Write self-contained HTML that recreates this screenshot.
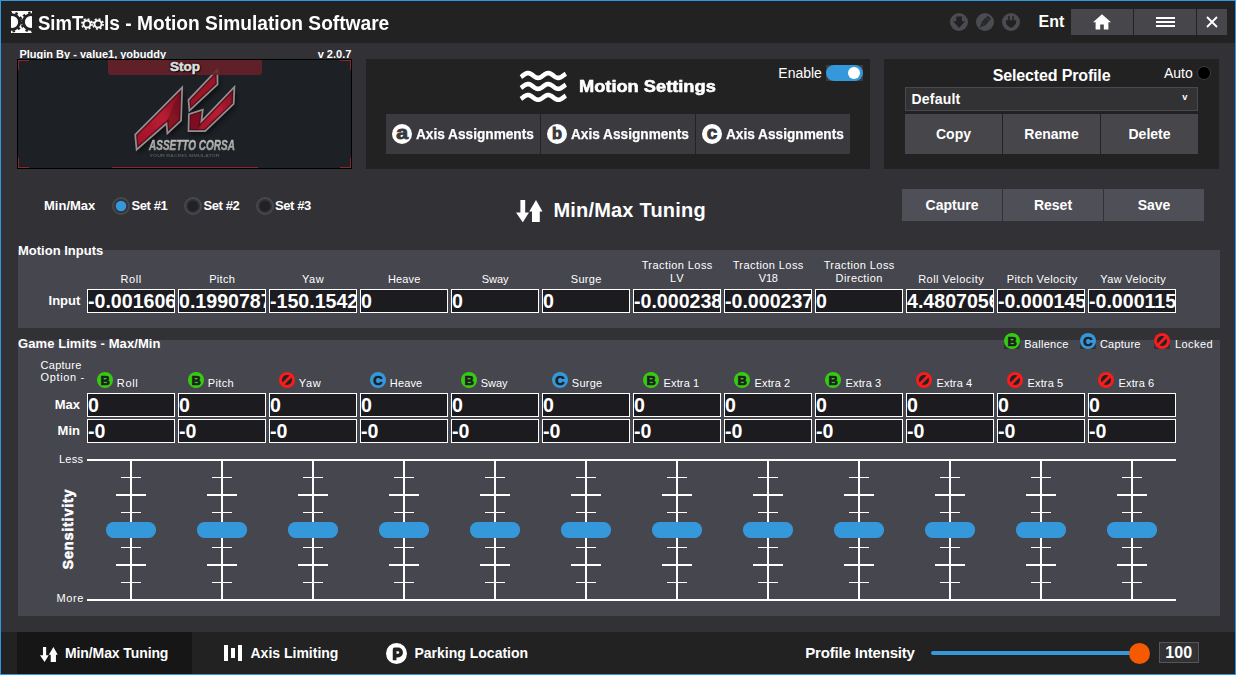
<!DOCTYPE html>
<html><head><meta charset="utf-8"><title>SimTools - Motion Simulation Software</title>
<style>
html,body{margin:0;padding:0;}
body{width:1236px;height:675px;overflow:hidden;background:#323136;font-family:"Liberation Sans",sans-serif;color:#fff;position:relative;}
.r{position:absolute;display:block;}
.t{position:absolute;white-space:nowrap;line-height:1em;color:#fff;}
.hv{-webkit-text-stroke:0.55px #fff;}
.hv2{-webkit-text-stroke:0.25px #fff;}
.box{position:absolute;box-sizing:border-box;border:1px solid #fff;background:#1c1b1f;overflow:hidden;width:88px;height:24px;}
.box span{position:absolute;left:0px;top:2.3px;font-size:19.6px;font-weight:bold;line-height:1em;white-space:nowrap;}
.btn{position:absolute;}
</style></head><body>

<div class="r" style="left:0;top:0;width:1234px;height:673px;border:1px solid #3197e3;"></div>
<div class="r" style="left:1px;top:1px;width:1234px;height:42px;background:#222223;"></div>
<svg class="r" style="left:11px;top:11px" width="21" height="22" viewBox="0 0 21 22">
<rect width="21" height="22" fill="#fff"/>
<circle cx="1.2" cy="11" r="7.4" fill="none" stroke="#222" stroke-width="2.9"/>
<circle cx="1.2" cy="11" r="9.4" fill="none" stroke="#222" stroke-width="2.2" stroke-dasharray="2.5 3.406"/>
<circle cx="19.8" cy="11" r="7.4" fill="none" stroke="#222" stroke-width="2.9"/>
<circle cx="19.8" cy="11" r="9.4" fill="none" stroke="#222" stroke-width="2.2" stroke-dasharray="2.5 3.406"/>
</svg>
<div class="t" style="top:13.07px;font-size:20px;font-weight:bold;left:37.70px;transform-origin:0 50%;transform:scaleX(0.925);">SimT</div>
<div class="t" style="top:13.07px;font-size:20px;font-weight:bold;left:103.90px;transform-origin:0 50%;transform:scaleX(0.958);">ls - Motion Simulation Software</div>
<svg class="r" style="left:79.6px;top:16.8px" width="14" height="14" viewBox="-7 -7 14 14"><circle r="3.5" fill="none" stroke="#fff" stroke-width="1.9"/><circle r="5.1" fill="none" stroke="#fff" stroke-width="1.6" stroke-dasharray="2.0 2.005"/></svg>
<svg class="r" style="left:91px;top:16.8px" width="14" height="14" viewBox="-7 -7 14 14"><circle r="3.5" fill="none" stroke="#fff" stroke-width="1.9"/><circle r="5.1" fill="none" stroke="#fff" stroke-width="1.6" stroke-dasharray="2.0 2.005"/></svg>
<svg class="r" style="left:950px;top:13px" width="18" height="18" viewBox="-9 -9 18 18"><circle r="9" fill="#4b4b52"/><path d="M-2.7 -5.6 H2.9 V-0.7 H6.1 L0.1 5.9 L-5.9 -0.7 H-2.7 Z" fill="#222223"/></svg>
<svg class="r" style="left:976px;top:13px" width="18" height="18" viewBox="-9 -9 18 18"><circle r="9" fill="#4b4b52"/><g transform="rotate(42)"><rect x="-2.1" y="-6.4" width="4.2" height="2" fill="#222223"/><rect x="-2.1" y="-3.9" width="4.2" height="6.6" fill="#2c2c30"/><path d="M-2.1 -3.9 V2.7 M2.1 -3.9 V2.7 M0 -3.9 V2.7" stroke="#222223" stroke-width="0.9"/><path d="M-2.1 3.2 H2.1 L0.9 5.4 H-0.9 Z" fill="#222223"/><rect x="-0.7" y="5.9" width="1.4" height="1.4" fill="#222223"/></g></svg>
<svg class="r" style="left:1002px;top:13px" width="18" height="18" viewBox="-9 -9 18 18"><circle r="9" fill="#4b4b52"/><rect x="-2.8" y="-5.9" width="1.5" height="5" fill="#222223"/><rect x="1.4" y="-5.9" width="1.5" height="5" fill="#222223"/><path d="M-5.1 -1.7 H5.2 V0 C5.2 2.2 3 4.6 0.05 6 C-3 4.6 -5.1 2.2 -5.1 0 Z" fill="#222223"/></svg>
<div class="t" style="top:14.46px;font-size:16px;font-weight:bold;left:1038.50px;">Ent</div>
<div class="r" style="left:1071px;top:9px;width:62px;height:26px;background:#46464b;"></div>
<div class="r" style="left:1134px;top:9px;width:62px;height:26px;background:#46464b;"></div>
<div class="r" style="left:1197px;top:9px;width:30px;height:26px;background:#46464b;"></div>
<svg class="r" style="left:1092px;top:13px" width="20" height="18" viewBox="0 0 20 18"><path d="M10 1.2 L1 9.2 H3.6 V16.6 H8.2 V11.4 H11.8 V16.6 H16.4 V9.2 H19 Z" fill="#fff"/></svg>
<div class="r" style="left:1156px;top:17px;width:19px;height:2px;background:#fff;"></div>
<div class="r" style="left:1156px;top:21px;width:19px;height:2px;background:#fff;"></div>
<div class="r" style="left:1156px;top:25px;width:19px;height:2px;background:#fff;"></div>
<svg class="r" style="left:1205px;top:15px" width="14" height="14" viewBox="0 0 14 14"><path d="M2 2 L12 12 M12 2 L2 12" stroke="#fff" stroke-width="1.9" fill="none"/></svg>
<div class="t" style="top:49.09px;font-size:11px;font-weight:bold;left:19.40px;">Plugin By - value1, yobuddy</div>
<div class="t" style="top:49.09px;font-size:11px;font-weight:bold;right:884.70px;">v 2.0.7</div>
<div class="r" style="left:17px;top:59px;width:333px;height:108px;border:1px solid #000;background:#1d2024;overflow:hidden;" id="pic">
<div class="r" style="left:0px;top:0px;width:11px;height:1px;background:#8a2630;"></div>
<div class="r" style="left:0px;top:0px;width:1px;height:10px;background:#8a2630;"></div>
<div class="r" style="left:322px;top:0px;width:11px;height:1px;background:#8a2630;"></div>
<div class="r" style="left:332px;top:0px;width:1px;height:10px;background:#8a2630;"></div>
<div class="r" style="left:0px;top:107px;width:11px;height:1px;background:#8a2630;"></div>
<div class="r" style="left:0px;top:98px;width:1px;height:10px;background:#8a2630;"></div>
<div class="r" style="left:322px;top:107px;width:11px;height:1px;background:#8a2630;"></div>
<div class="r" style="left:332px;top:98px;width:1px;height:10px;background:#8a2630;"></div>
<div class="r" style="left:94px;top:107px;width:146px;height:1px;background:#8a2630;"></div>
<svg class="r" style="left:0;top:0" width="333" height="108" viewBox="0 0 333 108">
<defs>
<linearGradient id="rg1" x1="0" y1="1" x2="1" y2="0"><stop offset="0" stop-color="#9a1428"/><stop offset="0.55" stop-color="#b81c32"/><stop offset="1" stop-color="#741020"/></linearGradient>
<linearGradient id="rg2" x1="0" y1="0" x2="1" y2="1"><stop offset="0" stop-color="#8a1424"/><stop offset="1" stop-color="#a2172b"/></linearGradient>
<linearGradient id="tg" x1="0" y1="0" x2="0" y2="1"><stop offset="0" stop-color="#cfcfcf"/><stop offset="1" stop-color="#8e8e8e"/></linearGradient>
<filter id="bl" x="-5%" y="-5%" width="110%" height="110%"><feGaussianBlur stdDeviation="0.4"/></filter>
<filter id="sh" x="-20%" y="-20%" width="140%" height="140%"><feGaussianBlur stdDeviation="2.5"/></filter>
<clipPath id="ca"><path d="M117.2 74.7 L164.2 27.5 L163.1 60.5 L149.4 73.4 L148.5 63.6 L118.6 89.7 Z"/></clipPath><clipPath id="cb"><path d="M199.3 9.6 L199.6 24.4 L171.4 50.7 L170.5 39.8 Z"/></clipPath><clipPath id="cc"><path d="M216.4 26.9 L215.7 43.8 L187.2 71.1 L170.5 71.1 L170.9 54.1 L184.8 49.6 L183.4 61.3 Z"/></clipPath>
</defs>
<g filter="url(#sh)" opacity="0.6" fill="#000"><path d="M119 78 L166 31 L165 64 L151 77 L150 67 L120 93 Z"/><path d="M201 17 L201 28 L173 54 L172 43 Z"/><path d="M218 30 L217 47 L189 74 L172 74 L172 57 L186 53 L185 64 Z"/></g>
<g filter="url(#bl)">
<path d="M117.2 74.7 L164.2 27.5 L163.1 60.5 L149.4 73.4 L148.5 63.6 L118.6 89.7 Z" fill="url(#rg1)"/><path d="M164.2 27.5 L163.1 60.5 L149.4 73.4 L148.5 63.6 L155 45 Z" fill="#7a1020" opacity="0.75"/><path d="M117.2 74.7 L164.2 27.5 L163.1 60.5 L149.4 73.4 L148.5 63.6 L118.6 89.7 Z" fill="none" stroke="#4e0a14" stroke-width="4.4" clip-path="url(#ca)" opacity="0.8"/><path d="M117.2 74.7 L164.2 27.5 L163.1 60.5 L149.4 73.4 L148.5 63.6 L118.6 89.7 Z" fill="none" stroke="#909094" stroke-width="1.7"/>
<path d="M199.3 9.6 L199.6 24.4 L171.4 50.7 L170.5 39.8 Z" fill="url(#rg2)"/><path d="M199.3 9.6 L199.6 24.4 L171.4 50.7 L170.5 39.8 Z" fill="none" stroke="#4e0a14" stroke-width="4.4" clip-path="url(#cb)" opacity="0.8"/><path d="M199.3 9.6 L199.6 24.4 L171.4 50.7 L170.5 39.8 Z" fill="none" stroke="#909094" stroke-width="1.7"/>
<path d="M216.4 26.9 L215.7 43.8 L187.2 71.1 L170.5 71.1 L170.9 54.1 L184.8 49.6 L183.4 61.3 Z" fill="url(#rg1)"/><path d="M170.9 54.1 L184.8 49.6 L183.4 61.3 L180 71.1 L170.5 71.1 Z" fill="#6e0e1c" opacity="0.7"/><path d="M216.4 26.9 L215.7 43.8 L187.2 71.1 L170.5 71.1 L170.9 54.1 L184.8 49.6 L183.4 61.3 Z" fill="none" stroke="#4e0a14" stroke-width="4.4" clip-path="url(#cc)" opacity="0.8"/><path d="M216.4 26.9 L215.7 43.8 L187.2 71.1 L170.5 71.1 L170.9 54.1 L184.8 49.6 L183.4 61.3 Z" fill="none" stroke="#909094" stroke-width="1.7"/>
</g>
<g filter="url(#bl)">
<text x="131" y="89.6" font-family="Liberation Sans" font-weight="bold" font-style="italic" font-size="15.5" fill="url(#tg)" stroke="#aaa" stroke-width="0.5" textLength="86" lengthAdjust="spacingAndGlyphs">ASSETTO CORSA</text>
<text x="131.5" y="96.6" font-family="Liberation Sans" font-weight="bold" font-size="4.2" fill="#55575b" textLength="70" lengthAdjust="spacingAndGlyphs">YOUR RACING SIMULATOR</text>
</g>
</svg>
<div class="r" style="left:90px;top:0;width:154px;height:14.5px;background:rgba(107,33,41,0.86);border-radius:0 0 3px 3px;"></div>
<div class="t hv" style="left:167px;top:0.6px;transform:translateX(-50%) scaleX(1.12);font-size:12px;font-weight:bold;color:#dedede;text-shadow:0 0 2px #000,0 0 2px #000,1px 1px 1px #000;-webkit-text-stroke:0.55px #dedede;">Stop</div>
</div>
<div class="r" style="left:366px;top:59px;width:504px;height:110px;background:#222223;"></div>
<svg class="r" style="left:514px;top:64px" width="60" height="44" viewBox="0 0 60 44"><g fill="none" stroke="#fff" stroke-width="4.6"><polyline points="6.85,12.96 7.35,12.65 7.85,12.31 8.35,11.95 8.85,11.57 9.35,11.20 9.85,10.84 10.35,10.49 10.85,10.16 11.35,9.87 11.85,9.62 12.35,9.41 12.85,9.25 13.35,9.15 13.85,9.10 14.35,9.11 14.85,9.18 15.35,9.31 15.85,9.49 16.35,9.71 16.85,9.98 17.35,10.29 17.85,10.62 18.35,10.98 18.85,11.35 19.35,11.72 19.85,12.09 20.35,12.44 20.85,12.77 21.35,13.07 21.85,13.34 22.35,13.55 22.85,13.72 23.35,13.83 23.85,13.89 24.35,13.89 24.85,13.83 25.35,13.72 25.85,13.55 26.35,13.34 26.85,13.07 27.35,12.77 27.85,12.44 28.35,12.09 28.85,11.72 29.35,11.35 29.85,10.98 30.35,10.62 30.85,10.29 31.35,9.98 31.85,9.71 32.35,9.49 32.85,9.31 33.35,9.18 33.85,9.11 34.35,9.10 34.85,9.15 35.35,9.25 35.85,9.41 36.35,9.62 36.85,9.87 37.35,10.16 37.85,10.49 38.35,10.84 38.85,11.20 39.35,11.57 39.85,11.95 40.35,12.31 40.85,12.65 41.35,12.96 41.85,13.24 42.35,13.47 42.85,13.66 43.35,13.80 43.85,13.88 44.35,13.90 44.85,13.86 45.35,13.77 45.85,13.63 46.35,13.43 46.85,13.18 47.35,12.90 47.85,12.58 48.35,12.23 48.85,11.87 49.35,11.50 49.85,11.13 50.35,10.77 50.85,10.42 51.35,10.10 51.85,9.82"/><polyline points="6.85,23.91 7.35,23.60 7.85,23.26 8.35,22.90 8.85,22.52 9.35,22.15 9.85,21.79 10.35,21.44 10.85,21.11 11.35,20.82 11.85,20.57 12.35,20.36 12.85,20.20 13.35,20.10 13.85,20.05 14.35,20.06 14.85,20.13 15.35,20.26 15.85,20.44 16.35,20.66 16.85,20.93 17.35,21.24 17.85,21.57 18.35,21.93 18.85,22.30 19.35,22.67 19.85,23.04 20.35,23.39 20.85,23.72 21.35,24.02 21.85,24.29 22.35,24.50 22.85,24.67 23.35,24.78 23.85,24.84 24.35,24.84 24.85,24.78 25.35,24.67 25.85,24.50 26.35,24.29 26.85,24.02 27.35,23.72 27.85,23.39 28.35,23.04 28.85,22.67 29.35,22.30 29.85,21.93 30.35,21.57 30.85,21.24 31.35,20.93 31.85,20.66 32.35,20.44 32.85,20.26 33.35,20.13 33.85,20.06 34.35,20.05 34.85,20.10 35.35,20.20 35.85,20.36 36.35,20.57 36.85,20.82 37.35,21.11 37.85,21.44 38.35,21.79 38.85,22.15 39.35,22.52 39.85,22.90 40.35,23.26 40.85,23.60 41.35,23.91 41.85,24.19 42.35,24.42 42.85,24.61 43.35,24.75 43.85,24.83 44.35,24.85 44.85,24.81 45.35,24.72 45.85,24.58 46.35,24.38 46.85,24.13 47.35,23.85 47.85,23.53 48.35,23.18 48.85,22.82 49.35,22.45 49.85,22.08 50.35,21.72 50.85,21.37 51.35,21.05 51.85,20.77"/><polyline points="6.85,34.86 7.35,34.55 7.85,34.21 8.35,33.85 8.85,33.47 9.35,33.10 9.85,32.74 10.35,32.39 10.85,32.06 11.35,31.77 11.85,31.52 12.35,31.31 12.85,31.15 13.35,31.05 13.85,31.00 14.35,31.01 14.85,31.08 15.35,31.21 15.85,31.39 16.35,31.61 16.85,31.88 17.35,32.19 17.85,32.52 18.35,32.88 18.85,33.25 19.35,33.62 19.85,33.99 20.35,34.34 20.85,34.67 21.35,34.97 21.85,35.24 22.35,35.45 22.85,35.62 23.35,35.73 23.85,35.79 24.35,35.79 24.85,35.73 25.35,35.62 25.85,35.45 26.35,35.24 26.85,34.97 27.35,34.67 27.85,34.34 28.35,33.99 28.85,33.62 29.35,33.25 29.85,32.88 30.35,32.52 30.85,32.19 31.35,31.88 31.85,31.61 32.35,31.39 32.85,31.21 33.35,31.08 33.85,31.01 34.35,31.00 34.85,31.05 35.35,31.15 35.85,31.31 36.35,31.52 36.85,31.77 37.35,32.06 37.85,32.39 38.35,32.74 38.85,33.10 39.35,33.47 39.85,33.85 40.35,34.21 40.85,34.55 41.35,34.86 41.85,35.14 42.35,35.37 42.85,35.56 43.35,35.70 43.85,35.78 44.35,35.80 44.85,35.76 45.35,35.67 45.85,35.53 46.35,35.33 46.85,35.08 47.35,34.80 47.85,34.48 48.35,34.13 48.85,33.77 49.35,33.40 49.85,33.03 50.35,32.67 50.85,32.32 51.35,32.00 51.85,31.72"/></g></svg>
<div class="t hv" style="top:79.46px;font-size:16px;font-weight:bold;left:578.50px;transform-origin:0 50%;transform:scaleX(1.14);">Motion Settings</div>
<div class="t" style="top:66.15px;font-size:14px;left:778.30px;">Enable</div>
<div class="r" style="left:826px;top:65px;width:37px;height:16px;background:#3a3a40;"></div>
<div class="r" style="left:826px;top:65px;width:37px;height:16px;background:#3498db;border-radius:8px;"></div>
<div class="r" style="left:848px;top:67px;width:12px;height:12px;background:#fff;border-radius:6px;"></div>
<div class="r" style="left:386px;top:114px;width:154px;height:40px;background:#3a3a3f;"></div>
<svg class="r" style="left:391.6px;top:124.3px" width="20" height="20" viewBox="0 0 20 20"><circle cx="10" cy="10" r="10" fill="#fff"/><g transform="translate(10.1 14.5) scale(1.17 1)"><text x="0" y="0" text-anchor="middle" font-family="Liberation Sans" font-weight="bold" font-size="18.2" fill="#38383d" stroke="#38383d" stroke-width="0.9">a</text></g></svg>
<div class="t hv2" style="top:126.95px;font-size:14px;font-weight:bold;left:416.40px;transform-origin:0 50%;transform:scaleX(0.975);">Axis Assignments</div>
<div class="r" style="left:541px;top:114px;width:154px;height:40px;background:#3a3a3f;"></div>
<svg class="r" style="left:546.6px;top:124.3px" width="20" height="20" viewBox="0 0 20 20"><circle cx="10" cy="10" r="10" fill="#fff"/><g transform="translate(10.1 14.5) scale(1.02 1)"><text x="0" y="0" text-anchor="middle" font-family="Liberation Sans" font-weight="bold" font-size="16" fill="#38383d" stroke="#38383d" stroke-width="0.9">b</text></g></svg>
<div class="t hv2" style="top:126.95px;font-size:14px;font-weight:bold;left:571.40px;transform-origin:0 50%;transform:scaleX(0.975);">Axis Assignments</div>
<div class="r" style="left:696px;top:114px;width:154px;height:40px;background:#3a3a3f;"></div>
<svg class="r" style="left:701.6px;top:124.3px" width="20" height="20" viewBox="0 0 20 20"><circle cx="10" cy="10" r="10" fill="#fff"/><g transform="translate(10.1 14.5) scale(1.0 1)"><text x="0" y="0" text-anchor="middle" font-family="Liberation Sans" font-weight="bold" font-size="19" fill="#38383d" stroke="#38383d" stroke-width="0.9">c</text></g></svg>
<div class="t hv2" style="top:126.95px;font-size:14px;font-weight:bold;left:726.40px;transform-origin:0 50%;transform:scaleX(0.975);">Axis Assignments</div>
<div class="r" style="left:884px;top:59px;width:335px;height:110px;background:#222223;"></div>
<div class="t" style="top:68.16px;font-size:16px;font-weight:bold;letter-spacing:-0.15px;left:1051.60px;transform:translateX(-50%);">Selected Profile</div>
<div class="t" style="top:66.15px;font-size:14px;left:1164.00px;">Auto</div>
<div class="r" style="left:1197px;top:66px;width:14px;height:14px;background:#000;border-radius:7px;box-sizing:border-box;border:1px solid #3c3c42;"></div>
<div class="r" style="left:905px;top:87px;width:291px;height:22px;border:1px solid #48484e;background:#323235;"></div>
<div class="t" style="top:92.05px;font-size:14px;font-weight:bold;letter-spacing:0.2px;left:911.50px;">Default</div>
<div class="t" style="top:93.43px;font-size:9.3px;font-weight:bold;left:1182.30px;">v</div>
<div class="r" style="left:905px;top:114px;width:97px;height:40px;background:#46464b;"></div>
<div class="t" style="top:127.15px;font-size:14px;font-weight:bold;left:953.50px;transform:translateX(-50%);">Copy</div>
<div class="r" style="left:1003px;top:114px;width:97px;height:40px;background:#46464b;"></div>
<div class="t" style="top:127.15px;font-size:14px;font-weight:bold;left:1051.50px;transform:translateX(-50%);">Rename</div>
<div class="r" style="left:1101px;top:114px;width:97px;height:40px;background:#46464b;"></div>
<div class="t" style="top:127.15px;font-size:14px;font-weight:bold;left:1149.50px;transform:translateX(-50%);">Delete</div>
<div class="t" style="top:199.00px;font-size:13px;font-weight:bold;left:44.00px;">Min/Max</div>
<svg class="r" style="left:111px;top:196px" width="20" height="20" viewBox="-10 -10 20 20"><circle r="8" fill="none" stroke="#47474e" stroke-width="2"/><circle r="5.3" fill="#3498db"/></svg>
<svg class="r" style="left:183px;top:196px" width="20" height="20" viewBox="-10 -10 20 20"><circle r="8" fill="none" stroke="#47474e" stroke-width="2"/><circle r="5.3" fill="#222224"/></svg>
<svg class="r" style="left:254.7px;top:196px" width="20" height="20" viewBox="-10 -10 20 20"><circle r="8" fill="none" stroke="#47474e" stroke-width="2"/><circle r="5.3" fill="#222224"/></svg>
<div class="t" style="top:199.00px;font-size:13px;font-weight:bold;letter-spacing:-0.4px;left:131.50px;">Set #1</div>
<div class="t" style="top:199.00px;font-size:13px;font-weight:bold;letter-spacing:-0.4px;left:203.50px;">Set #2</div>
<div class="t" style="top:199.00px;font-size:13px;font-weight:bold;letter-spacing:-0.4px;left:275.00px;">Set #3</div>
<svg class="r" style="left:516px;top:199.6px" width="26.50" height="22.40" viewBox="0 0 26.5 22.4"><path d="M4.4 0 H9.2 V12.4 H13 L6.8 22.4 L0 12.4 H4.4 Z" fill="#fff"/><path d="M20 0 L26.5 11.4 H23.8 V22.4 H16 V11.4 H13.2 Z" fill="#fff"/></svg>
<div class="t" style="top:199.77px;font-size:20px;font-weight:bold;letter-spacing:0.2px;left:553.40px;">Min/Max Tuning</div>
<div class="r" style="left:902px;top:189px;width:100px;height:32px;background:#4f4f58;"></div>
<div class="t" style="top:197.85px;font-size:14px;font-weight:bold;left:952.00px;transform:translateX(-50%);">Capture</div>
<div class="r" style="left:1003px;top:189px;width:100px;height:32px;background:#4f4f58;"></div>
<div class="t" style="top:197.85px;font-size:14px;font-weight:bold;left:1053.00px;transform:translateX(-50%);">Reset</div>
<div class="r" style="left:1104px;top:189px;width:100px;height:32px;background:#4f4f58;"></div>
<div class="t" style="top:197.85px;font-size:14px;font-weight:bold;left:1154.00px;transform:translateX(-50%);">Save</div>
<div class="r" style="left:18px;top:250px;width:1202px;height:78px;background:#46464e;"></div>
<div class="t" style="top:244.00px;font-size:13px;font-weight:bold;left:18.00px;">Motion Inputs</div>
<div class="t" style="top:294.00px;font-size:13px;font-weight:bold;right:1155.70px;">Input</div>
<div class="box" style="left:87px;top:289px;"><span>-0.001606</span></div>
<div class="t" style="top:273.69px;font-size:11px;letter-spacing:0.649px;left:131.20px;transform:translateX(-50%);">Roll</div>
<div class="box" style="left:178px;top:289px;"><span>0.1990787</span></div>
<div class="t" style="top:273.69px;font-size:11px;letter-spacing:0.333px;left:222.20px;transform:translateX(-50%);">Pitch</div>
<div class="box" style="left:269px;top:289px;"><span>-150.1542</span></div>
<div class="t" style="top:273.69px;font-size:11px;letter-spacing:0.653px;left:313.20px;transform:translateX(-50%);">Yaw</div>
<div class="box" style="left:360px;top:289px;"><span>0</span></div>
<div class="t" style="top:273.69px;font-size:11px;letter-spacing:0.151px;left:404.20px;transform:translateX(-50%);">Heave</div>
<div class="box" style="left:451px;top:289px;"><span>0</span></div>
<div class="t" style="top:273.69px;font-size:11px;letter-spacing:-0.035px;left:495.20px;transform:translateX(-50%);">Sway</div>
<div class="box" style="left:542px;top:289px;"><span>0</span></div>
<div class="t" style="top:273.69px;font-size:11px;letter-spacing:0.26px;left:586.20px;transform:translateX(-50%);">Surge</div>
<div class="box" style="left:633px;top:289px;"><span>-0.000238</span></div>
<div class="t" style="top:260.09px;font-size:11px;letter-spacing:0.423px;left:677.20px;transform:translateX(-50%);">Traction Loss</div>
<div class="t" style="top:272.89px;font-size:11px;letter-spacing:0.759px;left:677.20px;transform:translateX(-50%);">LV</div>
<div class="box" style="left:724px;top:289px;"><span>-0.000237</span></div>
<div class="t" style="top:260.09px;font-size:11px;letter-spacing:0.423px;left:768.20px;transform:translateX(-50%);">Traction Loss</div>
<div class="t" style="top:272.89px;font-size:11px;letter-spacing:-0.289px;left:768.20px;transform:translateX(-50%);">V18</div>
<div class="box" style="left:815px;top:289px;"><span>0</span></div>
<div class="t" style="top:260.09px;font-size:11px;letter-spacing:0.423px;left:859.20px;transform:translateX(-50%);">Traction Loss</div>
<div class="t" style="top:272.89px;font-size:11px;letter-spacing:0.437px;left:859.20px;transform:translateX(-50%);">Direction</div>
<div class="box" style="left:906px;top:289px;"><span>4.4807056</span></div>
<div class="t" style="top:273.69px;font-size:11px;letter-spacing:0.473px;left:951.20px;transform:translateX(-50%);">Roll Velocity</div>
<div class="box" style="left:997px;top:289px;"><span>-0.000145</span></div>
<div class="t" style="top:273.69px;font-size:11px;letter-spacing:0.391px;left:1042.20px;transform:translateX(-50%);">Pitch Velocity</div>
<div class="box" style="left:1088px;top:289px;"><span>-0.000115</span></div>
<div class="t" style="top:273.69px;font-size:11px;letter-spacing:0.349px;left:1133.20px;transform:translateX(-50%);">Yaw Velocity</div>
<div class="r" style="left:18px;top:340px;width:1202px;height:276px;background:#46464e;"></div>
<div class="t" style="top:337.00px;font-size:13px;font-weight:bold;letter-spacing:0.08px;left:18.00px;">Game Limits - Max/Min</div>
<div class="r" style="left:1004px;top:333px;width:16px;height:16px;background:#323136;"></div>
<svg class="r" style="left:1004px;top:333px" width="16" height="16" viewBox="0 0 16 16"><circle cx="8" cy="8" r="8" fill="#35cc10"/><text x="8.1" y="12.7" text-anchor="middle" font-family="Liberation Sans" font-weight="bold" font-size="13" fill="#1d1d22" stroke="#1d1d22" stroke-width="0.7">B</text></svg>
<div class="t" style="top:338.59px;font-size:11px;letter-spacing:0.285px;left:1024.20px;">Ballence</div>
<div class="r" style="left:1080px;top:333px;width:16px;height:16px;background:#323136;"></div>
<svg class="r" style="left:1080px;top:333px" width="16" height="16" viewBox="0 0 16 16"><circle cx="8" cy="8" r="8" fill="#3498db"/><text x="8" y="12.7" text-anchor="middle" font-family="Liberation Sans" font-weight="bold" font-size="13" fill="#1d1d22" stroke="#1d1d22" stroke-width="0.7">C</text></svg>
<div class="t" style="top:338.59px;font-size:11px;letter-spacing:0.227px;left:1099.90px;">Capture</div>
<div class="r" style="left:1154px;top:333px;width:16px;height:16px;background:#323136;"></div>
<svg class="r" style="left:1154px;top:333px" width="16" height="16" viewBox="0 0 16 16"><circle cx="8" cy="8" r="8" fill="#f81c1c"/><circle cx="8" cy="8" r="5" fill="#1c2424"/><path d="M3 11 L11 3 L13 5 L5 13 Z" fill="#f81c1c"/></svg>
<div class="t" style="top:338.59px;font-size:11px;letter-spacing:0.443px;left:1175.00px;">Locked</div>
<div class="t" style="top:359.89px;font-size:11px;letter-spacing:0.26px;left:40.60px;">Capture</div>
<div class="t" style="top:372.39px;font-size:11px;letter-spacing:0.637px;left:40.60px;">Option -</div>
<div class="t" style="top:397.60px;font-size:13px;font-weight:bold;right:1156.00px;">Max</div>
<div class="t" style="top:423.80px;font-size:13px;font-weight:bold;right:1156.00px;">Min</div>
<svg class="r" style="left:97px;top:372px" width="16" height="16" viewBox="0 0 16 16"><circle cx="8" cy="8" r="8" fill="#35cc10"/><text x="8.1" y="12.7" text-anchor="middle" font-family="Liberation Sans" font-weight="bold" font-size="13" fill="#1d1d22" stroke="#1d1d22" stroke-width="0.7">B</text></svg>
<div class="t" style="top:378.39px;font-size:11px;letter-spacing:0.649px;left:116.80px;">Roll</div>
<div class="box" style="left:87px;top:393px;"><span>0</span></div>
<div class="box" style="left:87px;top:419px;"><span>-0</span></div>
<svg class="r" style="left:188px;top:372px" width="16" height="16" viewBox="0 0 16 16"><circle cx="8" cy="8" r="8" fill="#35cc10"/><text x="8.1" y="12.7" text-anchor="middle" font-family="Liberation Sans" font-weight="bold" font-size="13" fill="#1d1d22" stroke="#1d1d22" stroke-width="0.7">B</text></svg>
<div class="t" style="top:378.39px;font-size:11px;letter-spacing:0.333px;left:207.80px;">Pitch</div>
<div class="box" style="left:178px;top:393px;"><span>0</span></div>
<div class="box" style="left:178px;top:419px;"><span>-0</span></div>
<svg class="r" style="left:279px;top:372px" width="16" height="16" viewBox="0 0 16 16"><circle cx="8" cy="8" r="8" fill="#f81c1c"/><circle cx="8" cy="8" r="5" fill="#1c2424"/><path d="M3 11 L11 3 L13 5 L5 13 Z" fill="#f81c1c"/></svg>
<div class="t" style="top:378.39px;font-size:11px;letter-spacing:0.653px;left:298.80px;">Yaw</div>
<div class="box" style="left:269px;top:393px;"><span>0</span></div>
<div class="box" style="left:269px;top:419px;"><span>-0</span></div>
<svg class="r" style="left:370px;top:372px" width="16" height="16" viewBox="0 0 16 16"><circle cx="8" cy="8" r="8" fill="#3498db"/><text x="8" y="12.7" text-anchor="middle" font-family="Liberation Sans" font-weight="bold" font-size="13" fill="#1d1d22" stroke="#1d1d22" stroke-width="0.7">C</text></svg>
<div class="t" style="top:378.39px;font-size:11px;letter-spacing:0.151px;left:389.80px;">Heave</div>
<div class="box" style="left:360px;top:393px;"><span>0</span></div>
<div class="box" style="left:360px;top:419px;"><span>-0</span></div>
<svg class="r" style="left:461px;top:372px" width="16" height="16" viewBox="0 0 16 16"><circle cx="8" cy="8" r="8" fill="#35cc10"/><text x="8.1" y="12.7" text-anchor="middle" font-family="Liberation Sans" font-weight="bold" font-size="13" fill="#1d1d22" stroke="#1d1d22" stroke-width="0.7">B</text></svg>
<div class="t" style="top:378.39px;font-size:11px;letter-spacing:-0.035px;left:480.80px;">Sway</div>
<div class="box" style="left:451px;top:393px;"><span>0</span></div>
<div class="box" style="left:451px;top:419px;"><span>-0</span></div>
<svg class="r" style="left:552px;top:372px" width="16" height="16" viewBox="0 0 16 16"><circle cx="8" cy="8" r="8" fill="#3498db"/><text x="8" y="12.7" text-anchor="middle" font-family="Liberation Sans" font-weight="bold" font-size="13" fill="#1d1d22" stroke="#1d1d22" stroke-width="0.7">C</text></svg>
<div class="t" style="top:378.39px;font-size:11px;letter-spacing:0.26px;left:571.80px;">Surge</div>
<div class="box" style="left:542px;top:393px;"><span>0</span></div>
<div class="box" style="left:542px;top:419px;"><span>-0</span></div>
<svg class="r" style="left:643px;top:372px" width="16" height="16" viewBox="0 0 16 16"><circle cx="8" cy="8" r="8" fill="#35cc10"/><text x="8.1" y="12.7" text-anchor="middle" font-family="Liberation Sans" font-weight="bold" font-size="13" fill="#1d1d22" stroke="#1d1d22" stroke-width="0.7">B</text></svg>
<div class="t" style="top:378.39px;font-size:11px;letter-spacing:0.123px;left:663.60px;">Extra 1</div>
<div class="box" style="left:633px;top:393px;"><span>0</span></div>
<div class="box" style="left:633px;top:419px;"><span>-0</span></div>
<svg class="r" style="left:734px;top:372px" width="16" height="16" viewBox="0 0 16 16"><circle cx="8" cy="8" r="8" fill="#35cc10"/><text x="8.1" y="12.7" text-anchor="middle" font-family="Liberation Sans" font-weight="bold" font-size="13" fill="#1d1d22" stroke="#1d1d22" stroke-width="0.7">B</text></svg>
<div class="t" style="top:378.39px;font-size:11px;letter-spacing:0.123px;left:754.60px;">Extra 2</div>
<div class="box" style="left:724px;top:393px;"><span>0</span></div>
<div class="box" style="left:724px;top:419px;"><span>-0</span></div>
<svg class="r" style="left:825px;top:372px" width="16" height="16" viewBox="0 0 16 16"><circle cx="8" cy="8" r="8" fill="#35cc10"/><text x="8.1" y="12.7" text-anchor="middle" font-family="Liberation Sans" font-weight="bold" font-size="13" fill="#1d1d22" stroke="#1d1d22" stroke-width="0.7">B</text></svg>
<div class="t" style="top:378.39px;font-size:11px;letter-spacing:0.123px;left:845.60px;">Extra 3</div>
<div class="box" style="left:815px;top:393px;"><span>0</span></div>
<div class="box" style="left:815px;top:419px;"><span>-0</span></div>
<svg class="r" style="left:916px;top:372px" width="16" height="16" viewBox="0 0 16 16"><circle cx="8" cy="8" r="8" fill="#f81c1c"/><circle cx="8" cy="8" r="5" fill="#1c2424"/><path d="M3 11 L11 3 L13 5 L5 13 Z" fill="#f81c1c"/></svg>
<div class="t" style="top:378.39px;font-size:11px;letter-spacing:0.123px;left:936.60px;">Extra 4</div>
<div class="box" style="left:906px;top:393px;"><span>0</span></div>
<div class="box" style="left:906px;top:419px;"><span>-0</span></div>
<svg class="r" style="left:1007px;top:372px" width="16" height="16" viewBox="0 0 16 16"><circle cx="8" cy="8" r="8" fill="#f81c1c"/><circle cx="8" cy="8" r="5" fill="#1c2424"/><path d="M3 11 L11 3 L13 5 L5 13 Z" fill="#f81c1c"/></svg>
<div class="t" style="top:378.39px;font-size:11px;letter-spacing:0.123px;left:1027.60px;">Extra 5</div>
<div class="box" style="left:997px;top:393px;"><span>0</span></div>
<div class="box" style="left:997px;top:419px;"><span>-0</span></div>
<svg class="r" style="left:1098px;top:372px" width="16" height="16" viewBox="0 0 16 16"><circle cx="8" cy="8" r="8" fill="#f81c1c"/><circle cx="8" cy="8" r="5" fill="#1c2424"/><path d="M3 11 L11 3 L13 5 L5 13 Z" fill="#f81c1c"/></svg>
<div class="t" style="top:378.39px;font-size:11px;letter-spacing:0.123px;left:1118.60px;">Extra 6</div>
<div class="box" style="left:1088px;top:393px;"><span>0</span></div>
<div class="box" style="left:1088px;top:419px;"><span>-0</span></div>
<div class="r" style="left:87px;top:459px;width:1089px;height:2px;background:#fff;"></div>
<div class="r" style="left:87px;top:599px;width:1089px;height:2px;background:#fff;"></div>
<div class="r" style="left:130px;top:460px;width:2px;height:140px;background:#fff;"></div>
<div class="r" style="left:121.0px;top:477px;width:20px;height:1px;background:#fff;"></div>
<div class="r" style="left:116.0px;top:494px;width:30px;height:2px;background:#fff;"></div>
<div class="r" style="left:121.0px;top:512px;width:20px;height:1px;background:#fff;"></div>
<div class="r" style="left:121.0px;top:547px;width:20px;height:1px;background:#fff;"></div>
<div class="r" style="left:116.0px;top:564px;width:30px;height:2px;background:#fff;"></div>
<div class="r" style="left:121.0px;top:582px;width:20px;height:1px;background:#fff;"></div>
<div class="r" style="left:106px;top:522px;width:50px;height:16px;background:#3498db;border-radius:7.5px;"></div>
<div class="r" style="left:221px;top:460px;width:2px;height:140px;background:#fff;"></div>
<div class="r" style="left:212.0px;top:477px;width:20px;height:1px;background:#fff;"></div>
<div class="r" style="left:207.0px;top:494px;width:30px;height:2px;background:#fff;"></div>
<div class="r" style="left:212.0px;top:512px;width:20px;height:1px;background:#fff;"></div>
<div class="r" style="left:212.0px;top:547px;width:20px;height:1px;background:#fff;"></div>
<div class="r" style="left:207.0px;top:564px;width:30px;height:2px;background:#fff;"></div>
<div class="r" style="left:212.0px;top:582px;width:20px;height:1px;background:#fff;"></div>
<div class="r" style="left:197px;top:522px;width:50px;height:16px;background:#3498db;border-radius:7.5px;"></div>
<div class="r" style="left:312px;top:460px;width:2px;height:140px;background:#fff;"></div>
<div class="r" style="left:303.0px;top:477px;width:20px;height:1px;background:#fff;"></div>
<div class="r" style="left:298.0px;top:494px;width:30px;height:2px;background:#fff;"></div>
<div class="r" style="left:303.0px;top:512px;width:20px;height:1px;background:#fff;"></div>
<div class="r" style="left:303.0px;top:547px;width:20px;height:1px;background:#fff;"></div>
<div class="r" style="left:298.0px;top:564px;width:30px;height:2px;background:#fff;"></div>
<div class="r" style="left:303.0px;top:582px;width:20px;height:1px;background:#fff;"></div>
<div class="r" style="left:288px;top:522px;width:50px;height:16px;background:#3498db;border-radius:7.5px;"></div>
<div class="r" style="left:403px;top:460px;width:2px;height:140px;background:#fff;"></div>
<div class="r" style="left:394.0px;top:477px;width:20px;height:1px;background:#fff;"></div>
<div class="r" style="left:389.0px;top:494px;width:30px;height:2px;background:#fff;"></div>
<div class="r" style="left:394.0px;top:512px;width:20px;height:1px;background:#fff;"></div>
<div class="r" style="left:394.0px;top:547px;width:20px;height:1px;background:#fff;"></div>
<div class="r" style="left:389.0px;top:564px;width:30px;height:2px;background:#fff;"></div>
<div class="r" style="left:394.0px;top:582px;width:20px;height:1px;background:#fff;"></div>
<div class="r" style="left:379px;top:522px;width:50px;height:16px;background:#3498db;border-radius:7.5px;"></div>
<div class="r" style="left:494px;top:460px;width:2px;height:140px;background:#fff;"></div>
<div class="r" style="left:485.0px;top:477px;width:20px;height:1px;background:#fff;"></div>
<div class="r" style="left:480.0px;top:494px;width:30px;height:2px;background:#fff;"></div>
<div class="r" style="left:485.0px;top:512px;width:20px;height:1px;background:#fff;"></div>
<div class="r" style="left:485.0px;top:547px;width:20px;height:1px;background:#fff;"></div>
<div class="r" style="left:480.0px;top:564px;width:30px;height:2px;background:#fff;"></div>
<div class="r" style="left:485.0px;top:582px;width:20px;height:1px;background:#fff;"></div>
<div class="r" style="left:470px;top:522px;width:50px;height:16px;background:#3498db;border-radius:7.5px;"></div>
<div class="r" style="left:585px;top:460px;width:2px;height:140px;background:#fff;"></div>
<div class="r" style="left:576.0px;top:477px;width:20px;height:1px;background:#fff;"></div>
<div class="r" style="left:571.0px;top:494px;width:30px;height:2px;background:#fff;"></div>
<div class="r" style="left:576.0px;top:512px;width:20px;height:1px;background:#fff;"></div>
<div class="r" style="left:576.0px;top:547px;width:20px;height:1px;background:#fff;"></div>
<div class="r" style="left:571.0px;top:564px;width:30px;height:2px;background:#fff;"></div>
<div class="r" style="left:576.0px;top:582px;width:20px;height:1px;background:#fff;"></div>
<div class="r" style="left:561px;top:522px;width:50px;height:16px;background:#3498db;border-radius:7.5px;"></div>
<div class="r" style="left:676px;top:460px;width:2px;height:140px;background:#fff;"></div>
<div class="r" style="left:667.0px;top:477px;width:20px;height:1px;background:#fff;"></div>
<div class="r" style="left:662.0px;top:494px;width:30px;height:2px;background:#fff;"></div>
<div class="r" style="left:667.0px;top:512px;width:20px;height:1px;background:#fff;"></div>
<div class="r" style="left:667.0px;top:547px;width:20px;height:1px;background:#fff;"></div>
<div class="r" style="left:662.0px;top:564px;width:30px;height:2px;background:#fff;"></div>
<div class="r" style="left:667.0px;top:582px;width:20px;height:1px;background:#fff;"></div>
<div class="r" style="left:652px;top:522px;width:50px;height:16px;background:#3498db;border-radius:7.5px;"></div>
<div class="r" style="left:767px;top:460px;width:2px;height:140px;background:#fff;"></div>
<div class="r" style="left:758.0px;top:477px;width:20px;height:1px;background:#fff;"></div>
<div class="r" style="left:753.0px;top:494px;width:30px;height:2px;background:#fff;"></div>
<div class="r" style="left:758.0px;top:512px;width:20px;height:1px;background:#fff;"></div>
<div class="r" style="left:758.0px;top:547px;width:20px;height:1px;background:#fff;"></div>
<div class="r" style="left:753.0px;top:564px;width:30px;height:2px;background:#fff;"></div>
<div class="r" style="left:758.0px;top:582px;width:20px;height:1px;background:#fff;"></div>
<div class="r" style="left:743px;top:522px;width:50px;height:16px;background:#3498db;border-radius:7.5px;"></div>
<div class="r" style="left:858px;top:460px;width:2px;height:140px;background:#fff;"></div>
<div class="r" style="left:849.0px;top:477px;width:20px;height:1px;background:#fff;"></div>
<div class="r" style="left:844.0px;top:494px;width:30px;height:2px;background:#fff;"></div>
<div class="r" style="left:849.0px;top:512px;width:20px;height:1px;background:#fff;"></div>
<div class="r" style="left:849.0px;top:547px;width:20px;height:1px;background:#fff;"></div>
<div class="r" style="left:844.0px;top:564px;width:30px;height:2px;background:#fff;"></div>
<div class="r" style="left:849.0px;top:582px;width:20px;height:1px;background:#fff;"></div>
<div class="r" style="left:834px;top:522px;width:50px;height:16px;background:#3498db;border-radius:7.5px;"></div>
<div class="r" style="left:949px;top:460px;width:2px;height:140px;background:#fff;"></div>
<div class="r" style="left:940.0px;top:477px;width:20px;height:1px;background:#fff;"></div>
<div class="r" style="left:935.0px;top:494px;width:30px;height:2px;background:#fff;"></div>
<div class="r" style="left:940.0px;top:512px;width:20px;height:1px;background:#fff;"></div>
<div class="r" style="left:940.0px;top:547px;width:20px;height:1px;background:#fff;"></div>
<div class="r" style="left:935.0px;top:564px;width:30px;height:2px;background:#fff;"></div>
<div class="r" style="left:940.0px;top:582px;width:20px;height:1px;background:#fff;"></div>
<div class="r" style="left:925px;top:522px;width:50px;height:16px;background:#3498db;border-radius:7.5px;"></div>
<div class="r" style="left:1040px;top:460px;width:2px;height:140px;background:#fff;"></div>
<div class="r" style="left:1031.0px;top:477px;width:20px;height:1px;background:#fff;"></div>
<div class="r" style="left:1026.0px;top:494px;width:30px;height:2px;background:#fff;"></div>
<div class="r" style="left:1031.0px;top:512px;width:20px;height:1px;background:#fff;"></div>
<div class="r" style="left:1031.0px;top:547px;width:20px;height:1px;background:#fff;"></div>
<div class="r" style="left:1026.0px;top:564px;width:30px;height:2px;background:#fff;"></div>
<div class="r" style="left:1031.0px;top:582px;width:20px;height:1px;background:#fff;"></div>
<div class="r" style="left:1016px;top:522px;width:50px;height:16px;background:#3498db;border-radius:7.5px;"></div>
<div class="r" style="left:1131px;top:460px;width:2px;height:140px;background:#fff;"></div>
<div class="r" style="left:1122.0px;top:477px;width:20px;height:1px;background:#fff;"></div>
<div class="r" style="left:1117.0px;top:494px;width:30px;height:2px;background:#fff;"></div>
<div class="r" style="left:1122.0px;top:512px;width:20px;height:1px;background:#fff;"></div>
<div class="r" style="left:1122.0px;top:547px;width:20px;height:1px;background:#fff;"></div>
<div class="r" style="left:1117.0px;top:564px;width:30px;height:2px;background:#fff;"></div>
<div class="r" style="left:1122.0px;top:582px;width:20px;height:1px;background:#fff;"></div>
<div class="r" style="left:1107px;top:522px;width:50px;height:16px;background:#3498db;border-radius:7.5px;"></div>
<div class="t" style="top:453.69px;font-size:11px;letter-spacing:0.217px;left:59.00px;">Less</div>
<div class="t" style="top:593.29px;font-size:11px;letter-spacing:0.579px;left:56.60px;">More</div>
<div class="t hv" style="left:68.3px;top:529px;font-size:14px;font-weight:bold;letter-spacing:0.8px;transform:translate(-50%,-50%) rotate(-90deg) scaleX(1.025);">Sensitivity</div>
<div class="r" style="left:1px;top:632px;width:1234px;height:42px;background:#222223;"></div>
<div class="r" style="left:17px;top:632px;width:175px;height:42px;background:#161617;"></div>
<svg class="r" style="left:40.1px;top:646.5px" width="17.76" height="15.01" viewBox="0 0 26.5 22.4"><path d="M4.4 0 H9.2 V12.4 H13 L6.8 22.4 L0 12.4 H4.4 Z" fill="#fff"/><path d="M20 0 L26.5 11.4 H23.8 V22.4 H16 V11.4 H13.2 Z" fill="#fff"/></svg>
<div class="t" style="top:646.15px;font-size:14px;font-weight:bold;letter-spacing:-0.1px;left:65.00px;">Min/Max Tuning</div>
<div class="r" style="left:224px;top:645px;width:4px;height:16px;background:#fff;"></div>
<div class="r" style="left:231px;top:648px;width:4px;height:10px;background:#fff;"></div>
<div class="r" style="left:238.4px;top:645px;width:4px;height:16px;background:#fff;"></div>
<div class="t" style="top:645.95px;font-size:14px;font-weight:bold;left:250.50px;">Axis Limiting</div>
<svg class="r" style="left:386px;top:643px" width="21" height="21" viewBox="0 0 21 21"><circle cx="10.5" cy="10.5" r="10.5" fill="#fff"/><path d="M8.6 17.2 V6.4 H12 a3.1 3.1 0 0 1 0 6.2 H8.6" fill="none" stroke="#222223" stroke-width="3.7" stroke-linejoin="round"/></svg>
<div class="t" style="top:645.95px;font-size:14px;font-weight:bold;left:414.50px;">Parking Location</div>
<div class="t" style="top:645.00px;font-size:15px;font-weight:bold;letter-spacing:-0.18px;left:805.30px;">Profile Intensity</div>
<div class="r" style="left:930.6px;top:651px;width:200px;height:3.8px;background:#3498db;border-radius:2px;"></div>
<div class="r" style="left:1128.8px;top:642.7px;width:21.4px;height:21.4px;background:#f55a00;border-radius:50%;"></div>
<div class="r" style="left:1159px;top:642px;width:38px;height:19px;border:1px solid #55555c;background:#323235;"></div>
<div class="t" style="top:645.26px;font-size:16px;font-weight:bold;left:1178.70px;transform:translateX(-50%);">100</div>
</body></html>
